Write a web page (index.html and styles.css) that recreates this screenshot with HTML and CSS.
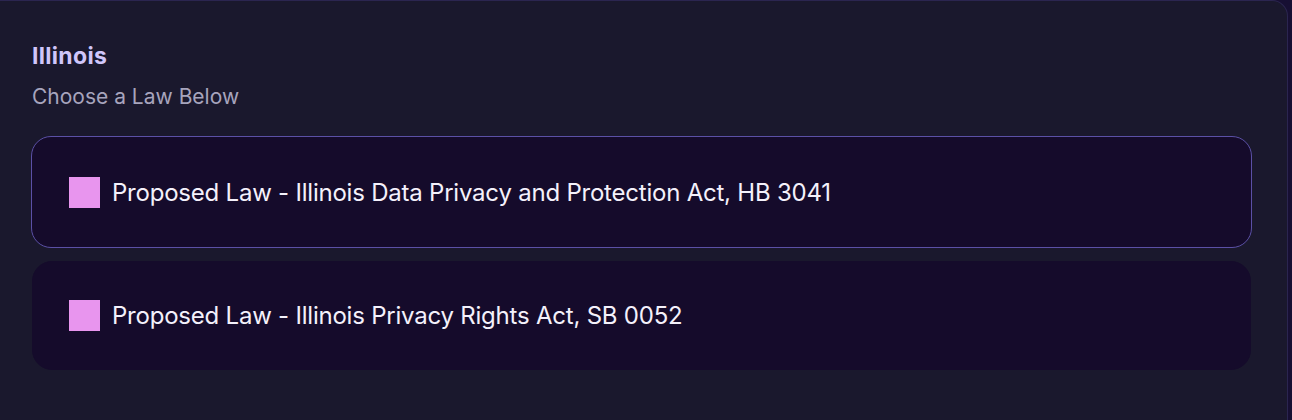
FILE: index.html
```html
<!DOCTYPE html>
<html>
<head>
<meta charset="utf-8">
<link rel="stylesheet" href="styles.css">
</head>
<body>
<div class="panel">
  <h2 class="title">Illinois</h2>
  <p class="subtitle">Choose a Law Below</p>
  <div class="list">
    <div class="law law--active"><span class="swatch"></span><span class="law-name">Proposed Law - Illinois Data Privacy and Protection Act, HB 3041</span></div>
    <div class="law"><span class="swatch"></span><span class="law-name">Proposed Law - Illinois Privacy Rights Act, SB 0052</span></div>
  </div>
</div>
</body>
</html>
```
FILE: styles.css
```css
html, body {
  margin: 0;
  padding: 0;
  background: #170f33;
  height: 420px;
  overflow: hidden;
}
body {
  font-family: Inter, "Liberation Sans", sans-serif;
  padding-right: 4px;
}
.panel {
  box-sizing: border-box;
  height: 440px;
  background: #1a182d;
  border: 1px solid #2b2550;
  border-left: none;
  border-radius: 0 16px 0 0;
  padding: 40px 36px 0 32px;
}
.title {
  margin: 0;
  font-size: 23px;
  font-weight: 700;
  color: #d0c6fa;
  line-height: 30px;
  letter-spacing: 0.3px;
}
.subtitle {
  margin: 12px 0 0;
  font-size: 21px;
  font-weight: 400;
  color: #a7a4bd;
  line-height: 28px;
}
.list {
  margin-top: 25px;
  display: flex;
  flex-direction: column;
  gap: 13px;
}
.law {
  box-sizing: border-box;
  background: #150b2b;
  border: 1px solid #150b2b;
  border-radius: 20px;
  display: flex;
  align-items: center;
  gap: 12px;
}
.law--active {
  border-color: #5b50a6;
  height: 112px;
  margin: 0 -1px;
  padding-left: 37px;
}
.law:not(.law--active) {
  height: 109px;
  padding-left: 36px;
}
.swatch {
  width: 31px;
  height: 31px;
  background: #e895ee;
  flex: none;
}
.law-name {
  font-size: 24px;
  color: #f4f1fb;
  letter-spacing: -0.22px;
}
```
